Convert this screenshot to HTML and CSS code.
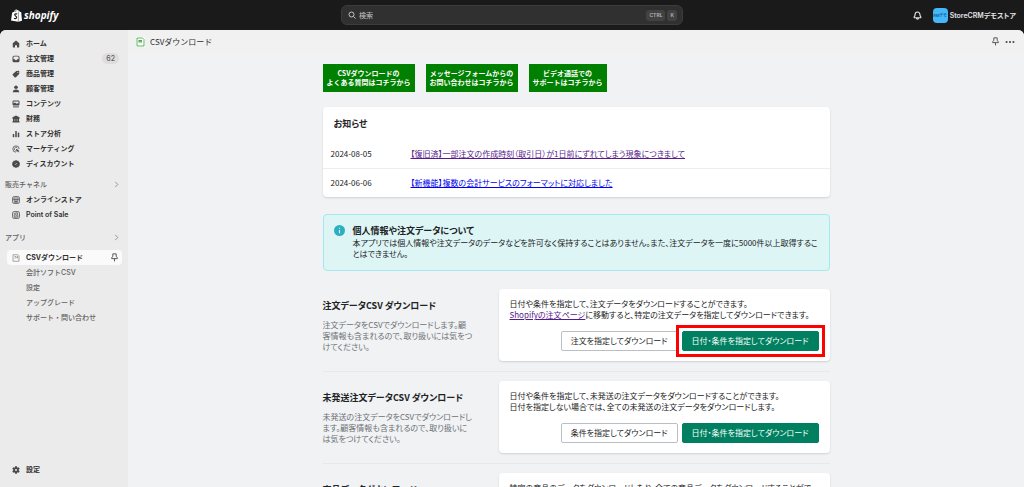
FILE: index.html
```html
<!DOCTYPE html>
<html lang="ja">
<head>
<meta charset="utf-8">
<title>CSVダウンロード</title>
<link rel="stylesheet" href="styles.css">
</head>
<body>
<div class="app">
  <header class="topbar">
    <a class="brand" href="#" aria-label="shopify">
      <svg class="bag" viewBox="0 0 22 26"><path fill="#fff" d="M2.4 7.2 5.6 6.2C6.3 3.2 8.4.8 10.8.8c1 0 1.700.5 2.200 1.300 1.300-.2 2 .9 2.500 2.100l1.500.1 1.700 1.800 1.700.1L22 23.600 14.500 25.500 0 22.900zM7 5.800l2.200-.7c.3-1.100.9-2.200 1.500-2.800C8.900 2.400 7.600 4 7 5.800zM10.600 4.700l1.800-.5c0-.7-.1-1.200-.4-1.600-.7.4-1.200 1.200-1.400 2.100z"/><path fill="none" stroke="#1a1a1a" stroke-width="2.300" d="M12.300 10.200c-2-1-4.800-.5-4.900 1.600-.1 2.300 4 2.400 3.800 5.200-.2 2.400-3 2.900-5.200 1.200"/><path stroke="#1a1a1a" stroke-width=".9" d="M14.700 5v20"/></svg>
      <span class="wordmark">shopify</span>
    </a>
    <label class="search">
      <svg class="ico-search" viewBox="0 0 16 16"><circle cx="7" cy="7" r="5"/><path d="m11 11 4 4"/></svg>
      <input class="search-input" type="text" placeholder="検索" aria-label="検索">
      <kbd class="key">CTRL</kbd><kbd class="key">K</kbd>
    </label>
    <div class="account">
      <button class="icon-button" aria-label="通知"><svg class="ico-bell" viewBox="0 0 16 16"><path d="M8 1.800c-2.800 0-4.300 2-4.300 4.500 0 2.200-.6 3-1.500 4-.6.800-.1 1.700.7 1.700h10.200c.8 0 1.300-.9.7-1.700-.9-1-1.500-1.800-1.500-4C12.300 3.800 10.800 1.800 8 1.800zM6 12.500c.2 2.600 3.800 2.600 4 0"/></svg></button>
      <button class="store"><span class="avatar">RMデモ</span><span>StoreCRMデモストア</span></button>
    </div>
  </header>

  <div class="frame">
    <nav class="sidebar">
      <ul class="menu">
        <li><a class="item" href="#"><svg class="ico" viewBox="0 0 16 16"><path d="M8 1 1.500 6.700V14c0 .6.400 1 1 1H6v-4.500h4V15h3.500c.6 0 1-.4 1-1V6.700z"/></svg>ホーム</a></li>
        <li><a class="item" href="#"><svg class="ico" viewBox="0 0 16 16"><path fill-rule="evenodd" d="M4 1.500h8A3 3 0 0 1 15 4.500v7a3 3 0 0 1-3 3H4a3 3 0 0 1-3-3v-7a3 3 0 0 1 3-3zM3 4v4.500h3c0 2.600 4 2.600 4 0h3V4c0-.6-.4-1-1-1H4c-.6 0-1 .4-1 1z"/></svg>注文管理<span class="count">62</span></a></li>
        <li><a class="item" href="#"><svg class="ico" viewBox="0 0 16 16"><path fill-rule="evenodd" d="M8.500 2 13 1.500c1 0 1.600.6 1.600 1.600L14.300 8 8 14.300c-.8.8-1.900.8-2.700 0L1.700 10.700c-.8-.8-.8-1.900 0-2.700zM11.600 3.300a1.200 1.200 0 1 0 .1 2.400 1.200 1.200 0 0 0-.1-2.400z"/></svg>商品管理</a></li>
        <li><a class="item" href="#"><svg class="ico" viewBox="0 0 16 16"><circle cx="8" cy="4.500" r="3.600"/><path d="M1.500 14.500c0-3.500 2.500-5.500 6.500-5.500s6.500 2 6.500 5.500z"/></svg>顧客管理</a></li>
        <li><a class="item" href="#"><svg class="ico" viewBox="0 0 16 16"><path fill-rule="evenodd" d="M3.500 1h9A2.500 2.500 0 0 1 15 3.500v5a2.500 2.500 0 0 1-2.500 2.500h-9A2.500 2.500 0 0 1 1 8.500v-5A2.500 2.500 0 0 1 3.500 1zM3 3v4l3-2 3 2.500 2-1.200L13 7V3z"/><path d="M2 12.500h3.500V15H3zM6.500 12.500h3V15h-3zM10.500 12.500H14L13 15h-2.500z"/></svg>コンテンツ</a></li>
        <li><a class="item" href="#"><svg class="ico" viewBox="0 0 16 16"><path d="M8 1 1 4.500V8h14V4.500zM2 8h3.300v5H2zM6.300 8h3.400v5H6.300zM10.700 8H14v5h-3.300zM1 12.500h14V15H1z"/></svg>財務</a></li>
        <li><a class="item" href="#"><svg class="ico" viewBox="0 0 16 16"><rect x="1.500" y="8" width="3" height="6.500" rx="1"/><rect x="6.500" y="2" width="3" height="12.500" rx="1"/><rect x="11.500" y="5" width="3" height="9.500" rx="1"/></svg>ストア分析</a></li>
        <li><a class="item" href="#"><svg class="ico line" viewBox="0 0 16 16"><path d="M14.300 8A6.300 6.300 0 1 0 8 14.300M11 6.500A3.300 3.300 0 1 0 7 11"/><path class="solid" d="m7.500 7.500 7.300 2.800-2.600 1.300 2.500 2.500-1 1-2.500-2.500-1.300 2z"/></svg>マーケティング</a></li>
        <li><a class="item" href="#"><svg class="ico" viewBox="0 0 16 16"><path d="m8 0 2.200 1.700 2.800-.3.800 2.600 2.200 1.500L15.200 8l.8 2.500-2.200 1.500-.8 2.600-2.800-.3L8 16l-2.200-1.700-2.800.3-.8-2.600L0 10.500.8 8 0 5.500 2.200 4 3 1.400l2.800.3z"/><path d="m6 10 4-4M5.500 6h1M9.500 10h1" stroke="#ebebeb" stroke-width="1"/></svg>ディスカウント</a></li>
      </ul>
      <button class="section">販売チャネル<svg class="chevron" viewBox="0 0 8 8"><path d="m2.500 1 3 3-3 3"/></svg></button>
      <ul class="menu">
        <li><a class="item" href="#"><svg class="ico line" viewBox="0 0 16 16"><rect x="1" y="1" width="14" height="14" rx="3.500"/><path d="M4 4h8l1 3H3zM4.500 7.500v5h7v-5M7 12V9.500h2V12"/></svg>オンラインストア</a></li>
        <li><a class="item latin" href="#"><svg class="ico line" viewBox="0 0 16 16"><rect x="1" y="1" width="14" height="14" rx="3.500"/><path d="M4.500 4.500 11 3.500l1 8.500-7.500.5zM9.300 6.500C8 6 6.800 6.500 7.200 7.500s2 .8 1.800 2-1.600 1-2.300.5"/></svg>Point of Sale</a></li>
      </ul>
      <button class="section apps">アプリ<svg class="chevron" viewBox="0 0 8 8"><path d="m2.500 1 3 3-3 3"/></svg></button>
      <ul class="menu">
        <li><a class="item active" href="#"><svg class="ico line doc" viewBox="0 0 16 16"><path d="M2 1.500h10l2 2v11H2zM5 5h3M11 4v5M5 8.500l6-3"/></svg>CSVダウンロード<svg class="pin" viewBox="0 0 16 16"><path d="M5 1.500h6v5l2 1.500v2H3V8l2-1.500zM8 10v5"/></svg></a></li>
        <li><a class="item sub" href="#">会計ソフトCSV</a></li>
        <li><a class="item sub" href="#">設定</a></li>
        <li><a class="item sub" href="#">アップグレード</a></li>
        <li><a class="item sub" href="#">サポート・問い合わせ</a></li>
      </ul>
      <a class="item settings" href="#"><svg class="ico" viewBox="0 0 16 16"><path fill-rule="evenodd" d="M6.300.3h3.400l.5 2.300 1.200.7 2.300-.8 1.700 3-1.800 1.600v1.800l1.800 1.600-1.700 3-2.300-.8-1.200.7-.5 2.300H6.300l-.5-2.300-1.200-.7-2.300.8-1.700-3 1.800-1.600V7.100L.6 5.500l1.700-3 2.300.8 1.200-.7zM8 6a2 2 0 1 0 0 4 2 2 0 0 0 0-4z"/></svg>設定</a>
    </nav>

    <main class="main">
      <div class="titlebar">
        <svg class="app-icon" viewBox="0 0 18 20"><rect width="18" height="20" rx="3" fill="#fff"/><path d="M2 2h11l3 3v13H2z" fill="#fff" stroke="#4caf50" stroke-width="1.800"/><path d="M5 6h7v5H5z" fill="#43a047"/><path d="M7 8.500h4" stroke="#fff"/></svg>
        <h1 class="title">CSVダウンロード</h1>
        <button class="icon-button end" aria-label="ピン留め"><svg class="pin" viewBox="0 0 16 16"><path d="M5 1.500h6v5l2 1.500v2H3V8l2-1.500zM8 10v5"/></svg></button>
        <button class="icon-button" aria-label="その他"><svg class="dots" viewBox="0 0 16 16"><circle cx="2.500" cy="8" r="1.700"/><circle cx="8" cy="8" r="1.700"/><circle cx="13.500" cy="8" r="1.700"/></svg></button>
      </div>

      <div class="content">
        <div class="help">
          <a class="help-link" href="#">CSVダウンロードの<br>よくある質問はコチラから</a>
          <a class="help-link" href="#">メッセージフォームからの<br>お問い合わせはコチラから</a>
          <a class="help-link" href="#">ビデオ通話での<br>サポートはコチラから</a>
        </div>

        <section class="card news">
          <h2 class="heading">お知らせ</h2>
          <table class="news-table">
            <tr><td class="date">2024-08-05</td><td><a class="visited" href="#">【復旧済】一部注文の作成時刻（取引日）が1日前にずれてしまう現象につきまして</a></td></tr>
            <tr><td class="date">2024-06-06</td><td><a class="link" href="#">【新機能】複数の会計サービスのフォーマットに対応しました</a></td></tr>
          </table>
        </section>

        <section class="banner">
          <svg class="info" viewBox="0 0 20 20"><circle cx="10" cy="10" r="10" fill="#2bb0c1"/><path d="M10 9v6M10 5v2" stroke="#def5f6" stroke-width="2"/></svg>
          <div>
            <h2 class="heading">個人情報や注文データについて</h2>
            <p class="text">本アプリでは個人情報や注文データのデータなどを許可なく保持することはありません。また、注文データを一度に5000件以上取得するこ<br>とはできません。</p>
          </div>
        </section>

        <section class="row">
          <div class="about">
            <h2 class="heading">注文データCSV ダウンロード</h2>
            <p class="text muted">注文データをCSVでダウンロードします。顧<br>客情報も含まれるので、取り扱いには気をつ<br>けてください。</p>
          </div>
          <div class="card panel">
            <p class="text">日付や条件を指定して、注文データをダウンロードすることができます。<br><a class="visited" href="#">Shopifyの注文ページ</a>に移動すると、特定の注文データを指定してダウンロードできます。</p>
            <div class="actions">
              <button class="button">注文を指定してダウンロード</button>
              <span class="marked"><button class="button primary">日付・条件を指定してダウンロード</button></span>
            </div>
          </div>
        </section>

        <section class="row">
          <div class="about">
            <h2 class="heading">未発送注文データCSV ダウンロード</h2>
            <p class="text muted">未発送の注文データをCSVでダウンロードし<br>ます。顧客情報も含まれるので、取り扱いに<br>は気をつけてください。</p>
          </div>
          <div class="card panel">
            <p class="text">日付や条件を指定して、未発送の注文データをダウンロードすることができます。<br>日付を指定しない場合では、全ての未発送の注文データをダウンロードします。</p>
            <div class="actions">
              <button class="button">条件を指定してダウンロード</button>
              <button class="button primary">日付・条件を指定してダウンロード</button>
            </div>
          </div>
        </section>

        <section class="row">
          <div class="about">
            <h2 class="heading">商品データダウンロード</h2>
          </div>
          <div class="card panel">
            <p class="text">特定の商品のデータをダウンロードしたり、全ての商品データをダウンロードすることがで<br>きます。</p>
          </div>
        </section>
      </div>
    </main>
  </div>
</div>
</body>
</html>
```

FILE: styles.css
```css
* { box-sizing: border-box; }
body, h1, h2, p, ul { margin: 0; padding: 0; }
ul { list-style: none; }
button, input { font: inherit; color: inherit; border: 0; padding: 0; background: none; }
svg { display: block; flex: none; }
a { color: inherit; text-decoration: none; }

body {
  font: 7px/15px Inter, "Noto Sans CJK JP", sans-serif;
  color: #303030;
  background: #1a1a1a;
}
.app { height: 100vh; display: flex; flex-direction: column; overflow: hidden; }

/* Top bar */
.topbar {
  flex: none;
  height: 30px;
  display: grid;
  grid-template-columns: 1fr 342px 1fr;
  align-items: center;
  background: #1a1a1a;
  color: #e3e3e3;
}
.brand { display: flex; align-items: center; gap: 2px; padding-left: 11px; color: #fff; }
.bag { width: 11px; height: 13px; }
.wordmark { font: italic 700 10px/14px "Noto Sans", sans-serif; }
.search {
  display: flex;
  align-items: center;
  gap: 2px;
  height: 20px;
  padding: 0 5px 0 6px;
  background: #303030;
  border: 1px solid #3c3c3c;
  border-radius: 6px;
}
.ico-search { width: 8px; height: 8px; fill: none; stroke: #c4c4c4; stroke-width: 2; }
.search-input { flex: 1; min-width: 0; margin-left: 1px; outline: 0; font-weight: 500; }
.search-input::placeholder { color: #b5b5b5; opacity: 1; }
.key {
  padding: 0 3px;
  font: 600 5px/11px Inter, sans-serif;
  color: #b5b5b5;
  background: #424242;
  border-radius: 3px;
}
.account { display: flex; justify-content: flex-end; align-items: center; gap: 11px; padding-right: 8px; }
.icon-button { display: flex; cursor: pointer; }
.ico-bell { width: 9px; height: 9px; fill: none; stroke: #e3e3e3; stroke-width: 2; }
.store { display: flex; align-items: center; gap: 2px; font-weight: 600; font-feature-settings: "palt"; }
.avatar {
  width: 15px;
  height: 15px;
  display: flex;
  justify-content: center;
  overflow: hidden;
  white-space: nowrap;
  font-size: 4px;
  color: #16608f;
  background: #45b8fb;
  border-radius: 4px;
}

/* Frame */
.frame { flex: 1; min-height: 0; display: flex; border-radius: 6px 6px 0 0; overflow: hidden; background: #f0f2f4; }
.sidebar {
  flex: none;
  width: 128px;
  display: flex;
  flex-direction: column;
  padding: 6px 6px 10px 7px;
  background: #ebebeb;
}
.item {
  display: flex;
  align-items: center;
  gap: 6px;
  height: 15px;
  padding: 0 3px 0 5px;
  font-weight: 700;
  border-radius: 4px;
}
.latin { font-weight: 600; }
.ico { width: 8px; height: 8px; fill: #4a4a4a; }
.line { fill: none; stroke: #4a4a4a; stroke-width: 1.5; }
.solid { fill: #4a4a4a; stroke: none; }
.doc { stroke: #8a8a8a; }
.count { margin-left: auto; padding: 0 4px; font-weight: 500; line-height: 11px; color: #616161; background: #dedede; border-radius: 6px; }
.section {
  display: flex;
  justify-content: space-between;
  align-items: center;
  height: 15px;
  margin: 6px 0 0 -2px;
  font-weight: 500;
  color: #616161;
}
.apps { margin-top: 8px; margin-bottom: 5px; }
.chevron { width: 7px; height: 7px; margin-right: 2px; fill: none; stroke: #8a8a8a; }
.active { background: #fafafa; }
.pin { width: 9px; height: 9px; margin-left: auto; fill: none; stroke: #4a4a4a; stroke-width: 1.6; }
.sub { padding-left: 19px; font-weight: 500; color: #616161; }
.settings { margin-top: auto; }

/* Main column */
.main { flex: 1; min-width: 0; font-feature-settings: "palt"; font-family: "Noto Sans CJK JP", sans-serif; }
.titlebar {
  display: flex;
  align-items: center;
  gap: 5px;
  height: 23px;
  padding: 0 9px 0 8px;
  background: #f1f1f1;
}
.app-icon { width: 9px; height: 10px; }
.title { font: 400 8px/15px "Noto Sans CJK JP", sans-serif; color: #303030; }
.end { margin-left: auto; }
.dots { width: 10px; height: 10px; fill: #4a4a4a; }
.content { max-width: 507px; margin: 0 auto; padding-top: 11px; color: #202223; }

.help { display: flex; gap: 11px; margin-bottom: 15px; }
.help-link {
  padding: 5px 4px;
  font: 700 7px/9px "Noto Sans CJK JP", sans-serif;
  font-feature-settings: normal;
  text-align: center;
  color: #fff;
  background: #008000;
}
.heading { font-size: 9px; line-height: 13px; font-weight: 700; }
.text { font-size: 8px; line-height: 11px; white-space: nowrap; }
.muted { color: #6d7175; }
.link { color: #0000ee; text-decoration: underline; }
.visited { color: #551a8b; text-decoration: underline; }
.card { background: #fff; border-radius: 4px; box-shadow: 0 1px 2px rgba(23, 24, 24, .15); }

.news { padding-top: 10px; }
.news .heading { padding: 0 11px 10px; }
.news-table { width: 100%; border-collapse: collapse; font-size: 8px; line-height: 12px; }
.news-table td { padding: 8px 0; }
.news-table tr + tr td { border-top: 1px solid #ebedef; }
.news-table .date { width: 88px; padding-left: 8px; }

.banner {
  display: flex;
  gap: 8px;
  margin: 17px 0 18px;
  padding: 9px 10px 11px;
  background: #def5f6;
  border: 1px solid #a4e8f2;
  border-radius: 4px;
}
.info { width: 11px; height: 11px; margin-top: 1px; }

.row { display: grid; grid-template-columns: 152px 1fr; gap: 24px; }
.row + .row { margin-top: 10px; padding-top: 9px; border-top: 1px solid #e6e8ea; }
.about { padding-top: 10px; }
.about .heading { margin-bottom: 7px; white-space: nowrap; }
.panel { padding: 9px 11px 10px; }
.actions { display: flex; justify-content: flex-end; gap: 4px; margin-top: 11px; }
.button {
  height: 20px;
  padding: 0 9px;
  font-size: 8px;
  line-height: 18px;
  white-space: nowrap;
  background: #fff;
  border: 1px solid #babfc3;
  border-radius: 2px;
}
.primary { color: #fff; background: #008060; border-color: #008060; }
.marked { position: relative; display: flex; }
.marked::after { content: ""; position: absolute; inset: -6px; border: 3px solid #f00; pointer-events: none; }
```
